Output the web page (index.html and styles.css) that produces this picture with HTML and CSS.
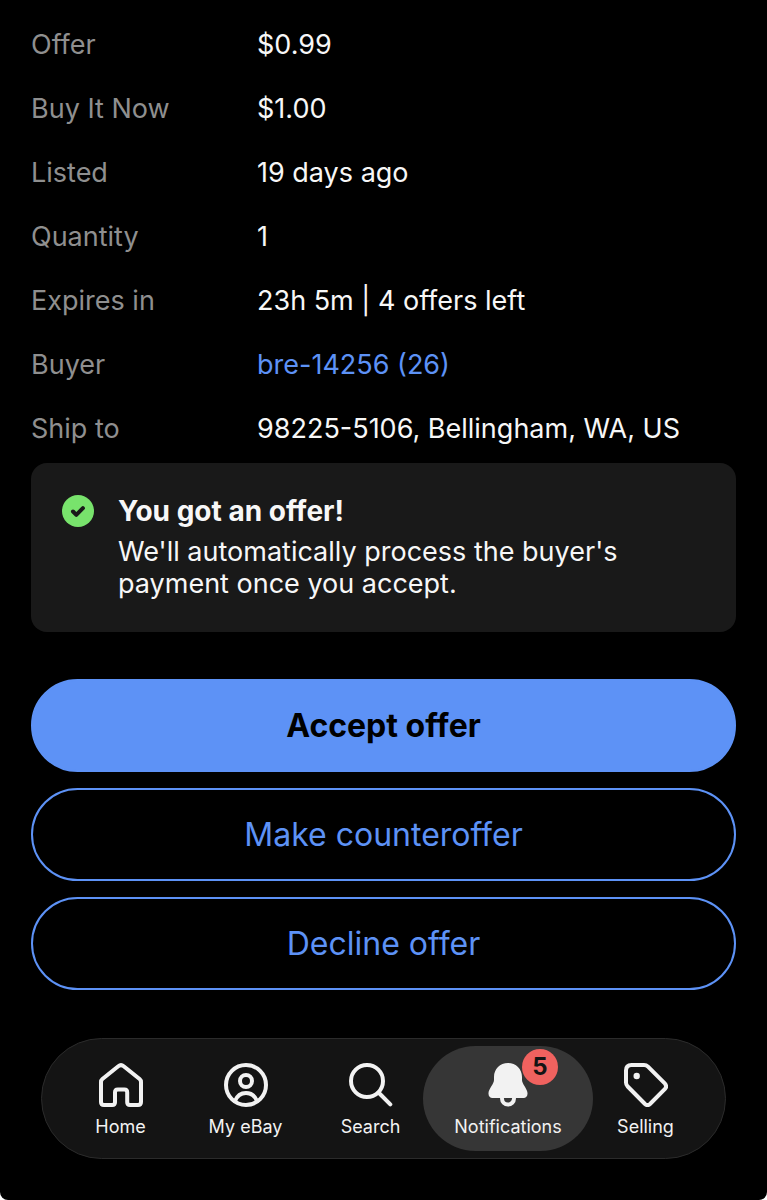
FILE: index.html
```html
<!DOCTYPE html>
<html lang="en">
<head>
<meta charset="utf-8">
<meta name="viewport" content="width=device-width, initial-scale=1">
<title>Offer details</title>
<link rel="stylesheet" href="styles.css">
</head>
<body>
<div class="screen">
  <main class="content">
    <dl class="details">
      <dt>Offer</dt><dd>$0.99</dd>
      <dt>Buy It Now</dt><dd>$1.00</dd>
      <dt>Listed</dt><dd>19 days ago</dd>
      <dt>Quantity</dt><dd>1</dd>
      <dt>Expires in</dt><dd>23h 5m | 4 offers left</dd>
      <dt>Buyer</dt><dd><a class="link" href="#buyer">bre-14256 (26)</a></dd>
      <dt>Ship to</dt><dd>98225-5106, Bellingham, WA, US</dd>
    </dl>

    <section class="notice">
      <svg class="notice-icon" viewBox="0 0 32 32" aria-hidden="true">
        <circle cx="16" cy="16" r="16" fill="#78e36c"/>
        <path d="M11 16.500l3.300 3.300 6.600-6.600" fill="none" stroke="#191919" stroke-width="4" stroke-linecap="round" stroke-linejoin="round"/>
      </svg>
      <div class="notice-body">
        <h2 class="notice-title">You got an offer!</h2>
        <p class="notice-text">We'll automatically process the buyer's payment once you accept.</p>
      </div>
    </section>

    <div class="actions">
      <button class="button button-primary" type="button">Accept offer</button>
      <button class="button" type="button">Make counteroffer</button>
      <button class="button" type="button">Decline offer</button>
    </div>
  </main>

  <nav class="tabs" aria-label="Main">
    <a class="tab" href="#home">
      <svg class="tab-icon" viewBox="0 0 44 44" aria-hidden="true"><path d="M2 19Q2 17.200 3.400 16L19.300 3.200Q22 1 24.700 3.200L40.600 16Q42 17.200 42 19V39Q42 42 39 42H31Q28.200 42 28.200 39.200V29.200Q28.200 26.400 25.400 26.400H18.800Q16 26.400 16 29.200V39.200Q16 42 13.200 42H5Q2 42 2 39Z"/></svg>
      <span>Home</span>
    </a>
    <a class="tab" href="#my-ebay">
      <svg class="tab-icon" viewBox="0 0 44 44" aria-hidden="true"><circle cx="22" cy="22" r="20"/><circle cx="22" cy="18" r="6"/><path d="M11 38C13 33 17 30 22 30S31 33 33 38"/></svg>
      <span>My eBay</span>
    </a>
    <a class="tab" href="#search">
      <svg class="tab-icon" viewBox="0 0 44 44" aria-hidden="true"><circle cx="18" cy="18" r="16"/><path d="M29.500 29.500L41.300 41.300"/></svg>
      <span>Search</span>
    </a>
    <a class="tab tab-active" href="#notifications" aria-current="page">
      <span class="badge-anchor">
        <svg class="tab-icon" viewBox="0 0 44 44" aria-hidden="true"><path class="solid" d="M22 0C14 0 8 6 8 14V17C8 21 2.800 25.500 2.500 30C2.300 33.300 4 35 6.500 35H37.500C40 35 41.700 33.300 41.500 30C41.200 25.500 36 21 36 17V14C36 6 30 0 22 0Z"/><path d="M16 35.500a6 6 0 0 0 12 0"/></svg>
        <span class="badge">5</span>
      </span>
      <span>Notifications</span>
    </a>
    <a class="tab" href="#selling">
      <svg class="tab-icon" viewBox="0 0 44 44" aria-hidden="true"><path d="M7.500 2H20Q22.300 2 24 3.700L41 20.700Q43.200 23.500 41 25.800L26 41Q23.500 43.200 21 41L3.700 23.500Q2 21.800 2 19.500V7.500Q2 2 7.500 2Z"/><circle class="solid" cx="12.700" cy="13" r="3.200"/></svg>
      <span>Selling</span>
    </a>
  </nav>
</div>
</body>
</html>
```
FILE: styles.css
```css
* {
  box-sizing: border-box;
}

body {
  margin: 0;
  background: #fff;
  font-family: "Inter", "Liberation Sans", sans-serif;
  font-size: 27px;
  line-height: 32px;
  color: #f7f7f7;
}

.screen {
  display: flex;
  flex-direction: column;
  justify-content: space-between;
  gap: 47px;
  min-height: 100vh;
  padding: 29px 31px 41px;
  background: #000;
  border-radius: 0 0 8px 8px;
}

.details {
  display: grid;
  grid-template-columns: 226px 1fr;
  row-gap: 32px;
  margin: 0 0 18px;
}

.details dt {
  color: #8f8f8f;
}

.details dd {
  margin: 0;
}

.link {
  color: #5d92f6;
  text-decoration: none;
}

.notice {
  display: flex;
  gap: 24px;
  padding: 32px 31px;
  background: #191919;
  border-radius: 16px;
}

.notice-icon {
  flex: none;
  width: 32px;
  height: 32px;
}

.notice-title {
  margin: 0 0 9px;
  font-size: 28px;
  font-weight: 700;
}

.notice-text {
  margin: 0;
}

.actions {
  display: flex;
  flex-direction: column;
  gap: 16px;
  margin-top: 47px;
}

.button {
  width: 100%;
  padding: 27px 24px 26px;
  border: 2px solid #5d92f6;
  border-radius: 999px;
  background: transparent;
  color: #5d92f6;
  font: inherit;
  font-size: 32px;
  line-height: 36px;
}

.button-primary {
  background: #5d92f6;
  color: #000;
  font-weight: 700;
}

.tabs {
  display: grid;
  grid-template-columns: 5fr 5fr 5fr 6fr 5fr;
  margin: 0 10px;
  padding: 7px 17px 7px 16px;
  border: 1px solid #2b2b2b;
  border-radius: 999px;
  background: #141414;
}

.tab {
  display: flex;
  flex-direction: column;
  align-items: center;
  gap: 8px;
  padding: 17px 0 12px;
  border-radius: 999px;
  color: #f2f2f2;
  font-size: 18px;
  line-height: 24px;
  text-decoration: none;
}

.tab-active {
  margin: 0 -10px;
  background: #363636;
}

.tab-icon {
  display: block;
  width: 44px;
  height: 44px;
  fill: none;
  stroke: currentColor;
  stroke-width: 4;
  stroke-linecap: round;
  stroke-linejoin: round;
}

.solid {
  fill: currentColor;
  stroke: none;
}

.badge-anchor {
  position: relative;
}

.badge {
  position: absolute;
  top: -14px;
  right: -28px;
  width: 36px;
  height: 36px;
  border-radius: 50%;
  background: #f0625f;
  color: #141414;
  font-size: 24px;
  font-weight: 700;
  line-height: 36px;
  text-align: center;
}
```
